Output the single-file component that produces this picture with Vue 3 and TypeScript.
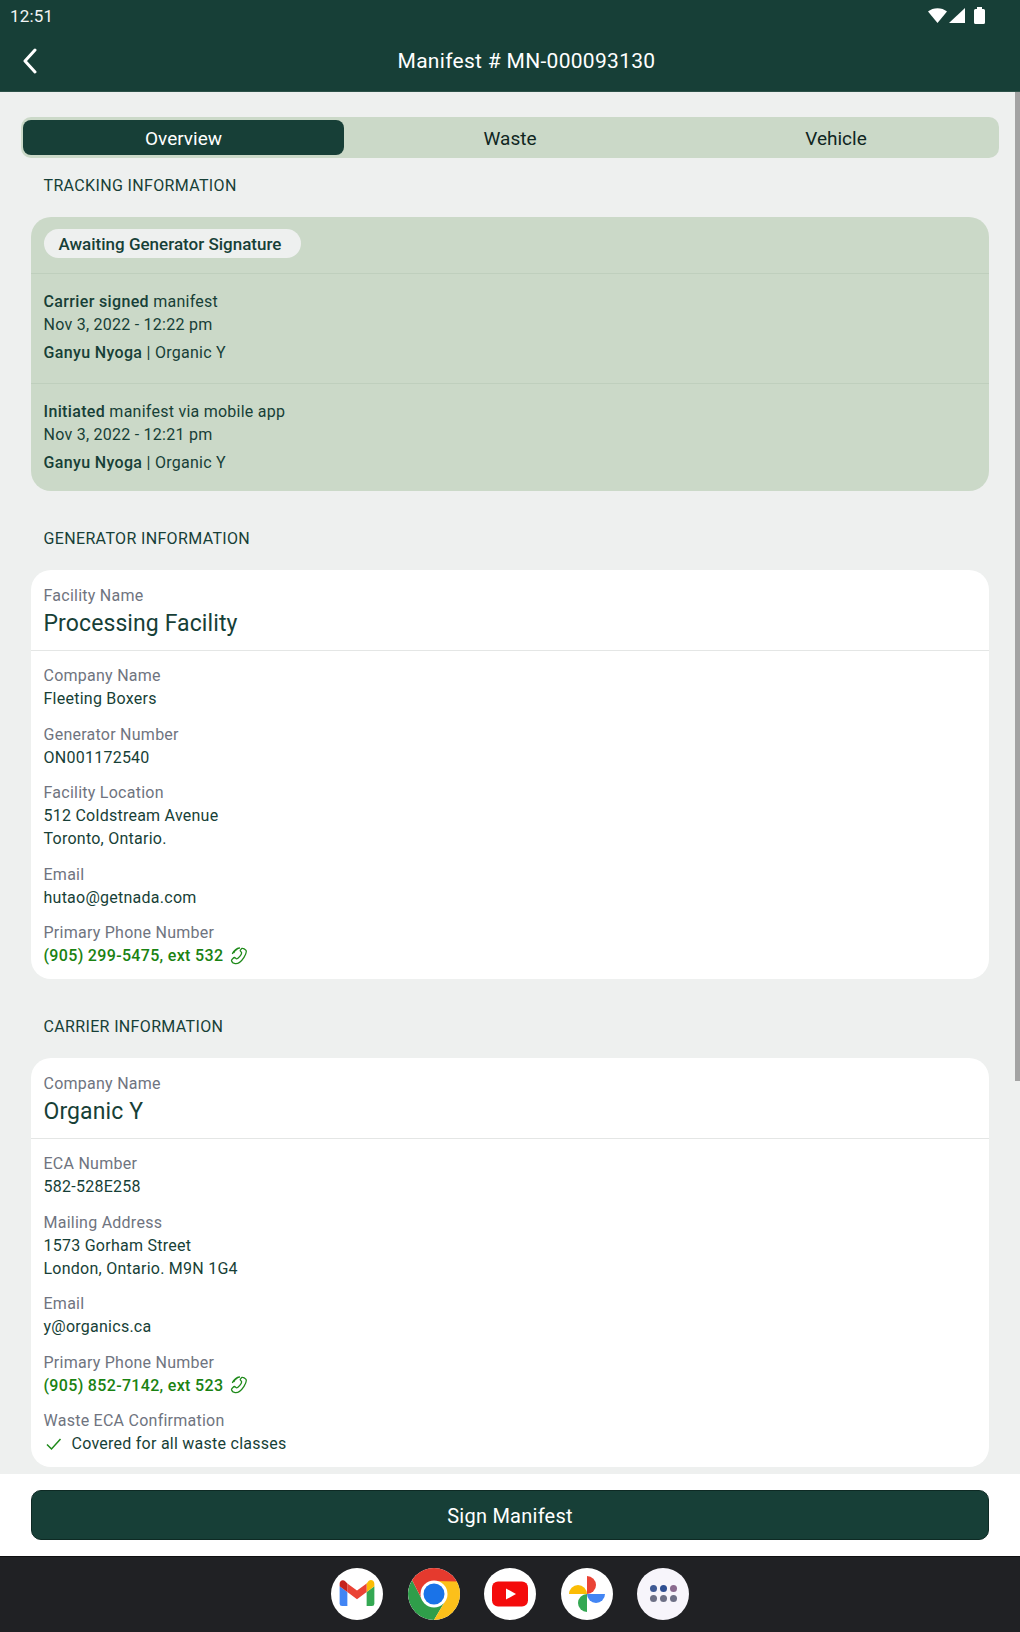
<script setup lang="ts">
interface Field {
  label: string
  lines: string[]
  phone?: boolean
  check?: boolean
}
interface Info {
  title: string
  headLabel: string
  headValue: string
  fields: Field[]
}
const tabs = ['Overview', 'Waste', 'Vehicle']
const events = [
  { strong: 'Carrier signed', rest: ' manifest', date: 'Nov 3, 2022 - 12:22 pm' },
  { strong: 'Initiated', rest: ' manifest via mobile app', date: 'Nov 3, 2022 - 12:21 pm' },
]
const sections: Info[] = [
  {
    title: 'GENERATOR INFORMATION',
    headLabel: 'Facility Name',
    headValue: 'Processing Facility',
    fields: [
      { label: 'Company Name', lines: ['Fleeting Boxers'] },
      { label: 'Generator Number', lines: ['ON001172540'] },
      { label: 'Facility Location', lines: ['512 Coldstream Avenue', 'Toronto, Ontario.'] },
      { label: 'Email', lines: ['hutao@getnada.com'] },
      { label: 'Primary Phone Number', lines: ['(905) 299-5475, ext 532'], phone: true },
    ],
  },
  {
    title: 'CARRIER INFORMATION',
    headLabel: 'Company Name',
    headValue: 'Organic Y',
    fields: [
      { label: 'ECA Number', lines: ['582-528E258'] },
      { label: 'Mailing Address', lines: ['1573 Gorham Street', 'London, Ontario. M9N 1G4'] },
      { label: 'Email', lines: ['y@organics.ca'] },
      { label: 'Primary Phone Number', lines: ['(905) 852-7142, ext 523'], phone: true },
      { label: 'Waste ECA Confirmation', lines: ['Covered for all waste classes'], check: true },
    ],
  },
]
const appDots = ['#3f5a94', '#2f4f92', '#8a6a8e', '#6d7085', '#6d7085', '#6d7085']
</script>

<template>
  <div class="screen">
    <header class="appbar">
      <div class="status">
        <span class="clock">12:51</span>
        <svg class="status-icons" width="57" height="17" viewBox="0 0 57 17">
          <path d="M0 4.500C5 0 14 0 19 4.500L9.500 16Z" fill="#fff" />
          <path d="M37 1V16H21Z" fill="#fff" />
          <path d="M46 3.500a1.500 1.500 0 0 1 1.500-1.500H49V0h5v2h1.500A1.500 1.500 0 0 1 57 3.500V15.500a1.500 1.500 0 0 1-1.500 1.500h-8A1.500 1.500 0 0 1 46 15.500Z" fill="#fff" />
        </svg>
      </div>
      <div class="titlebar">
        <svg class="back" width="16" height="26" viewBox="0 0 16 26">
          <path d="M13 2 3 13l10 11" fill="none" stroke="#fff" stroke-width="3" stroke-linecap="round" stroke-linejoin="round" />
        </svg>
        <h1>Manifest # MN-000093130</h1>
      </div>
    </header>

    <main class="content">
      <div class="tabs">
        <div v-for="(t, i) in tabs" :key="t" class="tab" :class="{ active: i === 0 }">{{ t }}</div>
      </div>

      <h2 class="sec first">TRACKING INFORMATION</h2>
      <section class="card tracking">
        <div class="pill-row"><span class="pill">Awaiting Generator Signature</span></div>
        <div v-for="e in events" :key="e.date" class="event">
          <div class="line"><b>{{ e.strong }}</b>{{ e.rest }}</div>
          <div class="line">{{ e.date }}</div>
          <div class="line who"><b>Ganyu Nyoga</b> | Organic Y</div>
        </div>
      </section>

      <template v-for="s in sections" :key="s.title">
        <h2 class="sec">{{ s.title }}</h2>
        <section class="card info">
          <div class="head">
            <div class="label">{{ s.headLabel }}</div>
            <div class="big">{{ s.headValue }}</div>
          </div>
          <div class="fields">
            <div v-for="f in s.fields" :key="f.label" class="field">
              <div class="label">{{ f.label }}</div>
              <div v-if="f.phone" class="line phone">
                <span>{{ f.lines[0] }}</span>
                <svg width="18" height="18" viewBox="0 0 18 18" fill="none" stroke="#1f8a1a" stroke-width="1.300" stroke-linecap="round" stroke-linejoin="round">
                  <path d="M11.500 1.500c1.200-.4 3.200.4 4.300 1.600.8 1 .2 4-1.800 7.200-2.200 3.400-5.800 6.600-8.800 6.300-1.600-.2-3.400-1.600-3.700-3-.1-.6 2.300-3.200 3-3.100.6.100 1.400 1.300 2.300 1.300 1.400 0 5-4.400 4.800-6-.1-.8-1.400-1.500-1.400-2.200 0-.500 1.700-2 1.300-2.100Z" />
                  <path d="M7 2.500C5.800 3 4.500 4.200 4 5.600M9.500 1C7 1.200 3.500 3.500 2.500 6.500" />
                </svg>
              </div>
              <div v-else-if="f.check" class="line checked">
                <svg width="18" height="14" viewBox="0 0 18 14" fill="none" stroke="#1f8a1a" stroke-width="1.500">
                  <path d="M2 7.500 6.500 12 15.500 2" />
                </svg>
                <span>{{ f.lines[0] }}</span>
              </div>
              <template v-else>
                <div v-for="l in f.lines" :key="l" class="line">{{ l }}</div>
              </template>
            </div>
          </div>
        </section>
      </template>

      <div class="scrollbar"></div>
    </main>

    <div class="action">
      <button class="sign">Sign Manifest</button>
    </div>

    <nav class="dock">
      <div class="app">
        <svg width="36" height="27" viewBox="0 0 36 28">
          <path d="M2.500 27H8V12.500L0 6.500V24.500A2.500 2.500 0 0 0 2.500 27Z" fill="#4285f4" />
          <path d="M28 27h5.500A2.500 2.500 0 0 0 36 24.500V6.500l-8 6Z" fill="#34a853" />
          <path d="M28 3.500v9l8-6V4C36 .5 32.500-1 30 1Z" fill="#fbbc04" />
          <path d="M8 12.500v-9l10 7.500 10-7.500v9L18 20Z" fill="#ea4335" />
          <path d="M0 4v2.500l8 6v-9L6 1.500C3.500-1 0 .5 0 4Z" fill="#c5221f" />
        </svg>
      </div>
      <div class="app chrome">
        <svg width="52" height="52" viewBox="0 0 52 52">
          <path d="M14.500 32.500 4 12A26 26 0 0 0 26 52L37.500 32.500Z" fill="#2f9e4a" />
          <path d="M26 13H49.500A26 26 0 0 1 26 52L37.500 32.500Z" fill="#fcc01a" />
          <path d="M26 26 14.500 32.500 4 12A26 26 0 0 1 49.500 13.500L26 13Z" fill="#e53a2e" />
          <circle cx="26" cy="26" r="13.500" fill="#fff" />
          <circle cx="26" cy="26" r="10.500" fill="#1a73e8" />
        </svg>
      </div>
      <div class="app">
        <svg width="36" height="26" viewBox="0 0 36 26">
          <rect width="36" height="25" y="0.500" rx="6" fill="#f40b0b" />
          <path d="M14 7.500v11L24 13Z" fill="#fff" />
        </svg>
      </div>
      <div class="app">
        <svg width="38" height="38" viewBox="0 0 38 38">
          <path d="M19 1a9 9 0 0 1 0 18Z" fill="#ea4335" />
          <path d="M37 19a9 9 0 0 1-18 0Z" fill="#4285f4" />
          <path d="M19 37a9 9 0 0 1 0-18Z" fill="#34a853" />
          <path d="M1 19a9 9 0 0 1 18 0Z" fill="#fbbc04" />
        </svg>
      </div>
      <div class="app apps">
        <div class="dots">
          <i v-for="(c, i) in appDots" :key="i" :style="{ background: c }"></i>
        </div>
      </div>
    </nav>
  </div>
</template>

<style>
html, body { margin: 0; background: #eef0ef; }
</style>

<style scoped>
.screen {
  width: 1020px;
  height: 1632px;
  display: flex;
  flex-direction: column;
  overflow: hidden;
  font-family: Roboto, "Liberation Sans", sans-serif;
  color: #173f37;
  background: #eef0ef;
}
.appbar {
  background: #173f37;
  color: #fff;
  height: 92px;
  flex: none;
  border-bottom: 1px solid #2d5249;
  box-sizing: border-box;
}
.status {
  height: 34px;
  box-sizing: border-box;
  padding: 0 35px 3px 10px;
  display: flex;
  align-items: center;
  justify-content: space-between;
}
.clock { font-size: 17px; letter-spacing: 0.2px; color: #f2f5f4; }
.status-icons { display: block; }
.titlebar {
  height: 54px;
  box-sizing: border-box;
  padding-left: 33px;
  position: relative;
  display: flex;
  align-items: center;
  justify-content: center;
}
.back { position: absolute; left: 22px; top: 14px; }
h1 {
  margin: 0;
  font-size: 21px;
  font-weight: 400;
  letter-spacing: 0.3px;
}
.content {
  flex: 1;
  min-height: 0;
  overflow: hidden;
  position: relative;
  padding: 25px 31px 0;
}
.tabs {
  margin: 0 -10px;
  height: 41px;
  box-sizing: border-box;
  padding: 3px 0;
  background: #cbd9c8;
  border-radius: 10px;
  display: grid;
  grid-template-columns: repeat(3, 1fr);
  align-items: stretch;
}
.tab {
  display: flex;
  align-items: center;
  justify-content: center;
  font-size: 19px;
  padding-top: 2px;
  color: #10261f;
  border-radius: 8px;
}
.tab.active {
  background: #173f37;
  color: #fff;
  margin: 0 3px 0 2px;
}
.sec {
  margin: 0;
  padding: 38px 12.500px 0;
  height: 41px;
  box-sizing: content-box;
  font-size: 16px;
  line-height: 20px;
  font-weight: 400;
  letter-spacing: 0.35px;
}
.sec.first { padding-top: 18px; height: 41px; }
.card { border-radius: 20px; overflow: hidden; }
.tracking {
  background: #cbd9c8;
  height: 274px;
  font-size: 16px;
}
.pill-row {
  height: 57px;
  box-sizing: border-box;
  padding: 12px 12.500px 0;
  border-bottom: 1px solid #bfcfbd;
}
.pill {
  display: inline-block;
  height: 29px;
  line-height: 30px;
  padding: 0 20px 0 15px;
  border-radius: 15px;
  background: #eef0ef;
  font-size: 17px;
  font-weight: 500;
}
.event {
  height: 110px;
  box-sizing: border-box;
  padding: 16px 12.500px 0;
  border-bottom: 1px solid #bfcfbd;
}
.event:last-child { border-bottom: 0; }
.line { font-size: 16px; line-height: 23px; letter-spacing: 0.25px; }
.line b { font-weight: 500; letter-spacing: 0.35px; }
.who { margin-top: 5px; }
.info { background: #fff; }
.head {
  height: 81px;
  box-sizing: border-box;
  padding: 14px 12.500px 0;
  border-bottom: 1px solid #e4e6e5;
}
.label {
  font-size: 16px;
  line-height: 23px;
  color: #6f7480;
  letter-spacing: 0.25px;
}
.big {
  margin-top: 2px;
  font-size: 23px;
  line-height: 30px;
  letter-spacing: 0.1px;
  color: #173f37;
}
.fields {
  padding: 13px 12.500px 12px;
  display: flex;
  flex-direction: column;
  gap: 12.500px;
}
.phone {
  display: flex;
  align-items: center;
  gap: 7px;
  color: #1a8212;
  font-weight: 500;
  letter-spacing: 0.33px;
}
.checked {
  display: flex;
  align-items: center;
  gap: 9px;
  padding-left: 1px;
}
.scrollbar {
  position: absolute;
  right: 0;
  top: 0;
  width: 5px;
  height: 989px;
  background: #a3a3a3;
}
.action {
  flex: none;
  height: 82px;
  box-sizing: border-box;
  background: #fff;
  padding: 16px 31px;
}
.sign {
  width: 100%;
  height: 50px;
  display: block;
  border: 1px solid #0e2a24;
  border-radius: 10px;
  background: #173f37;
  color: #fff;
  font-family: inherit;
  font-size: 20px;
  letter-spacing: 0.25px;
  padding: 2px 0 0;
}
.dock {
  flex: none;
  height: 76px;
  background: #202124;
  display: flex;
  align-items: center;
  justify-content: center;
  gap: 24.500px;
  box-sizing: border-box;
  border-top: 1px solid #0f0f10;
  padding-bottom: 2px;
}
.app {
  width: 52px;
  height: 52px;
  border-radius: 50%;
  background: #fff;
  display: flex;
  align-items: center;
  justify-content: center;
  overflow: hidden;
}
.apps { background: #f7f5fb; }
.dots {
  display: grid;
  grid-template-columns: repeat(3, 7px);
  gap: 3px;
}
.dots i { width: 7px; height: 7px; border-radius: 50%; display: block; }
</style>
